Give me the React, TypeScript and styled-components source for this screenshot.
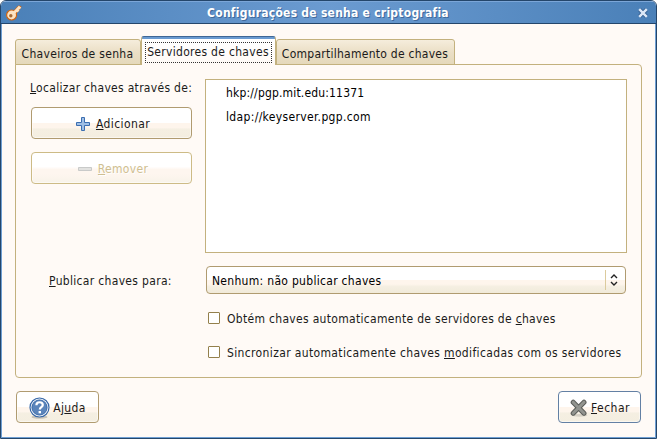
import React from "react";
import styled, { createGlobalStyle, css } from "styled-components";

const Global = createGlobalStyle`
  *, *::before, *::after { box-sizing: border-box; }
  body { margin: 0; background: #fff; overflow: hidden; }
  u { text-decoration: underline 1px; text-underline-offset: 1px; text-decoration-skip-ink: none; }
`;

const font = css`
  font-family: "DejaVu Sans Condensed", "DejaVu Sans", sans-serif;
  font-size: 12px;
  line-height: 16px;
  color: #1a1a1a;
`;

const Window = styled.div`
  ${font}
  width: 657px;
  height: 439px;
  display: flex;
  flex-direction: column;
  border: 1px solid #24466b;
  border-radius: 6px 6px 0 0;
  background: #fffaf6;
  overflow: hidden;
`;

const TitleBar = styled.header`
  flex: none;
  height: 23px;
  display: flex;
  align-items: center;
  padding: 0 8px 0 5px;
  background: linear-gradient(90deg, #4a80b8, #6b9bd1 50%, #4a80b8);
  border-top: 1px solid #7ba6d8;
  border-bottom: 1px solid #24466b;
`;

const Title = styled.h1`
  flex: 1;
  margin: 0;
  padding-right: 4px;
  text-align: center;
  font-size: 12px;
  font-weight: bold;
  line-height: 16px;
  color: #fff;
  letter-spacing: 0.25px;
  text-shadow: 1px 1px 0 #41699b;
`;

const Body = styled.main`
  flex: 1;
  display: flex;
  flex-direction: column;
  padding: 12px 13px 14px;
  border: solid #6f9fd3;
  border-width: 0 1px 1px;
`;

const Tabs = styled.div`
  flex: none;
  display: flex;
  align-items: flex-end;
  height: 29px;
  margin-bottom: -1px;
  z-index: 1;
`;

const Tab = styled.div<{ $w: number; $active?: boolean }>`
  width: ${(p) => p.$w}px;
  height: 26px;
  display: flex;
  align-items: center;
  justify-content: center;
  border: 1px solid #c3b17e;
  border-radius: 3px 3px 0 0;
  background: linear-gradient(#f5eddc, #ebdfc6 50%, #e5d9bb);
  padding: 4px 1px 0 0;
  ${(p) =>
    p.$active &&
    css`
      height: 29px;
      border-top: 1px solid #3f6796;
      border-bottom: 0;
      background: linear-gradient(#6b9bd1 2px, #fff 2px, #fffaf6);
      padding: 2px 0 0;
    `}
`;

const FocusRing = styled.span`
  width: 127px;
  height: 21px;
  display: flex;
  align-items: center;
  justify-content: center;
  padding-right: 1px;
  border: 1px dotted #333;
`;

const Text = styled.span<{ $ls?: number; $disabled?: boolean }>`
  white-space: nowrap;
  letter-spacing: ${(p) => p.$ls ?? 0.3}px;
  ${(p) => p.$disabled && `color: #cfbf91; text-shadow: 1px 1px 0 #fff;`}
`;

const Panel = styled.section`
  width: 627px;
  height: 314px;
  padding: 14px 14px 0;
  border: 1px solid #c3b17e;
  border-radius: 0 4px 4px 4px;
`;

const Servers = styled.div`
  display: grid;
  grid-template-columns: 162px 422px;
  column-gap: 13px;
`;

const Actions = styled.div`
  display: flex;
  flex-direction: column;
  align-items: flex-end;
  gap: 13px;
`;

const ActionsLabel = styled.div`
  width: 162px;
  height: 15px;
  padding-top: 1px;
`;

const List = styled.ul`
  height: 174px;
  margin: 0;
  padding: 1px 20px;
  border: 1px solid #c3b17e;
  background: #fff;
  list-style: none;
`;

const ListItem = styled.li`
  height: 24px;
  line-height: 24px;
  color: #000;
`;

const Button = styled.button<{ $w: number; $tone?: string; $gap?: number; $shift?: number }>`
  ${font}
  width: ${(p) => p.$w}px;
  height: 32px;
  display: flex;
  align-items: center;
  justify-content: center;
  gap: ${(p) => p.$gap ?? 6}px;
  padding: 1px 0 0 ${(p) => p.$shift ?? 3}px;
  border: 1px solid ${(p) => p.$tone ?? "#b09b70"};
  border-radius: 4px;
  background: linear-gradient(#fff 0 50%, #fef5ec 50% 66%, #f5efe2 70%, #f4eee0);
  box-shadow: inset 0 0 0 1px rgba(255, 255, 255, 0.5);
  &:disabled {
    background: linear-gradient(#fff 0 45%, #fef6ef 55% 70%, #f8f3e9);
  }
`;

const PublishRow = styled.div`
  display: flex;
  align-items: center;
  height: 28px;
  margin-top: 13px;
`;

const PublishLabel = styled.label`
  width: 176px;
  padding: 2px 0 0 19px;
`;

const Combo = styled.div`
  width: 420px;
  height: 28px;
  display: flex;
  align-items: center;
  padding: 0 7px 0 5px;
  border: 1px solid #b09b70;
  border-radius: 4px;
  color: #000;
  background: linear-gradient(#fff 0 50%, #fef5ec 50% 66%, #f5efe2 75%, #f1ead9);
`;

const ComboValue = styled.span`
  padding-top: 2px;
`;

const ComboMark = styled.span`
  height: 20px;
  margin-left: auto;
  padding-left: 4px;
  display: flex;
  align-items: center;
  border-left: 1px solid #dccb9d;
`;

const Checks = styled.div`
  display: flex;
  flex-direction: column;
  gap: 18px;
  margin: 16px 0 0 178px;
`;

const CheckRow = styled.label`
  display: flex;
  align-items: center;
  gap: 7px;
  height: 16px;
`;

const CheckText = styled.span`
  padding-top: 2px;
`;

const Box = styled.span`
  width: 12px;
  height: 12px;
  border: 1px solid #94804c;
  border-radius: 1px;
  background: #fff;
`;

const Footer = styled.footer`
  display: flex;
  justify-content: space-between;
  padding: 0 1px;
  margin-top: 13px;
`;

const KeyIcon = () => (
  <svg width="16" height="16" viewBox="0 0 16 16">
    <path d="M8 8 L13 2.5 L14.5 3.5 M11 5 L12.5 6.5" stroke="#cf6410" strokeWidth="4" fill="none" strokeLinejoin="round" />
    <circle cx="5.6" cy="10" r="5" fill="#fce3c2" stroke="#cf6410" strokeWidth="1.2" />
    <path d="M7 9 L13 2.5 L14.5 3.5 M11 5 L12.5 6.5" stroke="#fce3c2" strokeWidth="2.6" fill="none" />
    <circle cx="4.8" cy="10.7" r="1.7" fill="#a86b35" />
  </svg>
);

const CloseIcon = () => (
  <svg width="10" height="10" viewBox="0 0 10 10">
    <path d="M1.5 1.5 L8.5 8.5 M8.5 1.5 L1.5 8.5" stroke="#365f91" strokeWidth="4" />
    <path d="M1.2 1.2 L8.8 8.8 M8.8 1.2 L1.2 8.8" stroke="#dce8f7" strokeWidth="2.4" />
  </svg>
);

const AddIcon = () => (
  <svg width="14" height="14" viewBox="0 0 14 14">
    <path d="M5.5.5h3v5h5v3h-5v5h-3v-5h-5v-3h5z" fill="#9fbfe5" stroke="#3c6eb0" />
  </svg>
);

const RemoveIcon = () => (
  <svg width="14" height="14" viewBox="0 0 14 14">
    <path d="M.5 5.5h13v3H.5z" fill="#e2e2e0" stroke="#c9cac9" />
  </svg>
);

const HelpIcon = () => (
  <svg width="21" height="22" viewBox="0 0 21 22">
    <ellipse cx="10.5" cy="20" rx="8" ry="1.8" fill="#000" opacity=".18" />
    <circle cx="10.5" cy="10.5" r="9.5" fill="#fff" stroke="#3768a8" strokeWidth="1.2" />
    <circle cx="10.5" cy="10.5" r="7.6" fill="#5b85bb" stroke="#3768a8" />
    <path d="M7.4 8.2c0-4 6.4-3.8 6.4-.2 0 2.2-3 2.2-3 4.6" fill="none" stroke="#fff" strokeWidth="2.2" />
    <path d="M9.6 14h2.4v2.3H9.6z" fill="#fff" />
  </svg>
);

const CrossIcon = () => (
  <svg width="18" height="18" viewBox="0 0 18 18">
    <ellipse cx="9.5" cy="16.3" rx="8" ry="1.4" fill="#000" opacity=".12" />
    <path d="M3.2 3.2 L14 14.2 M14 3.2 L3.2 14.2" stroke="#5b5d59" strokeWidth="5" strokeLinecap="round" />
    <path d="M3.2 3.2 L14 14.2 M14 3.2 L3.2 14.2" stroke="#92948f" strokeWidth="3" strokeLinecap="round" />
  </svg>
);

const SortIcon = () => (
  <svg width="8" height="12" viewBox="0 0 8 12">
    <path d="M1 4 L4 1 L7 4 M1 8 L4 11 L7 8" fill="none" stroke="#222" strokeWidth="1.4" />
  </svg>
);

export default function App() {
  return (
    <>
      <Global />
      <Window>
        <TitleBar>
          <KeyIcon />
          <Title>Configurações de senha e criptografia</Title>
          <CloseIcon />
        </TitleBar>
        <Body>
          <Tabs>
            <Tab $w={126}><Text>Chaveiros de senha</Text></Tab>
            <Tab $w={135} $active>
              <FocusRing><Text>Servidores de chaves</Text></FocusRing>
            </Tab>
            <Tab $w={179}><Text $ls={0.26}>Compartilhamento de chaves</Text></Tab>
          </Tabs>
          <Panel>
            <Servers>
              <Actions>
                <ActionsLabel><Text $ls={0.3}><u>L</u>ocalizar chaves através de:</Text></ActionsLabel>
                <Button $w={161}><AddIcon /><Text $ls={0.4}><u>A</u>dicionar</Text></Button>
                <Button $w={161} $tone="#cdbb86" disabled><RemoveIcon /><Text $disabled><u>R</u>emover</Text></Button>
              </Actions>
              <List>
                <ListItem><Text $ls={0.17}>hkp://pgp.mit.edu:11371</Text></ListItem>
                <ListItem><Text $ls={0.34}>ldap://keyserver.pgp.com</Text></ListItem>
              </List>
            </Servers>
            <PublishRow>
              <PublishLabel><Text $ls={0.32}><u>P</u>ublicar chaves para:</Text></PublishLabel>
              <Combo>
                <ComboValue><Text>Nenhum: não publicar chaves</Text></ComboValue>
                <ComboMark><SortIcon /></ComboMark>
              </Combo>
            </PublishRow>
            <Checks>
              <CheckRow><Box /><CheckText><Text $ls={0.31}>Obtém chaves automaticamente de servidores de <u>c</u>haves</Text></CheckText></CheckRow>
              <CheckRow><Box /><CheckText><Text $ls={0.36}>Sincronizar automaticamente chaves <u>m</u>odificadas com os servidores</Text></CheckText></CheckRow>
            </Checks>
          </Panel>
          <Footer>
            <Button $w={83} $gap={3} $shift={0}><HelpIcon /><Text $ls={0.4}>Aj<u>u</u>da</Text></Button>
            <Button $w={83} $gap={3} $shift={1} $tone="#6380a4"><CrossIcon /><Text $ls={0.5}><u>F</u>echar</Text></Button>
          </Footer>
        </Body>
      </Window>
    </>
  );
}
